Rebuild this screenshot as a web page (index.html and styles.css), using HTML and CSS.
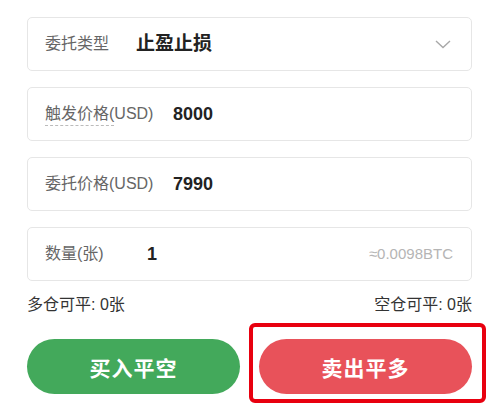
FILE: index.html
```html
<!DOCTYPE html>
<html>
<head>
<meta charset="utf-8">
<link rel="stylesheet" href="styles.css">
</head>
<body>
<div class="form">
  <div class="field">
    <span class="label">委托类型</span>
    <span class="value type">止盈止损</span>
    <svg class="chevron" width="16" height="9" viewBox="0 0 16 9"><path d="M1 1 L8 7.5 L15 1" fill="none" stroke="#a8a8a8" stroke-width="1.4"/></svg>
  </div>
  <div class="field">
    <span class="label dashed">触发价格(USD)</span>
    <span class="value">8000</span>
  </div>
  <div class="field">
    <span class="label">委托价格(USD)</span>
    <span class="value">7990</span>
  </div>
  <div class="field">
    <span class="label qty">数量(张)</span>
    <span class="value">1</span>
    <span class="hint">≈0.0098BTC</span>
  </div>
  <div class="avail">
    <span>多仓可平: 0张</span>
    <span>空仓可平: 0张</span>
  </div>
  <div class="actions">
    <button class="btn buy">买入平空</button>
    <div class="highlight"><button class="btn sell">卖出平多</button></div>
  </div>
</div>
</body>
</html>
```

FILE: styles.css
```css
* { box-sizing: border-box; }
html, body { height: 410px; overflow: hidden; }
body {
  margin: 0;
  background: #fff;
  font-family: "Liberation Sans", Arial, "Noto Sans CJK SC", sans-serif;
}
.form {
  width: 500px;
  padding: 17px 28px 0 27px;
  display: flex;
  flex-direction: column;
  gap: 16px;
}
.field {
  height: 54px;
  border: 1px solid #e6e6e6;
  border-radius: 5px;
  display: flex;
  align-items: center;
  padding: 0 18px 0 17px;
  line-height: 20px;
}
.label {
  font-size: 16px;
  color: #666;
  width: 128px;
  flex-shrink: 0;
}
.field:first-child .label { width: 91px; }
.label.qty { width: 102px; }
.label.dashed {
  position: relative;
}
.label.dashed::after {
  content: "";
  position: absolute;
  left: 0;
  top: 21px;
  width: 69px;
  border-bottom: 1px dashed #bbb;
}
.value {
  font-size: 18px;
  font-weight: bold;
  color: #222;
}
.value.type { font-size: 19px; }
.chevron { margin-left: auto; margin-right: 2px; }
.hint {
  margin-left: auto;
  font-size: 15px;
  color: #b5b5b5;
}
.avail {
  display: flex;
  justify-content: space-between;
  font-size: 16px;
  line-height: 20px;
  color: #333;
  margin-top: -2px;
}
.actions {
  display: flex;
  justify-content: space-between;
  align-items: flex-start;
  margin-top: 8px;
}
.btn {
  display: block;
  width: 213px;
  height: 55px;
  border: none;
  border-radius: 28px;
  color: #fff;
  font-size: 21px;
  line-height: 24px;
  font-weight: bold;
  font-family: "Noto Sans CJK SC", sans-serif;
  letter-spacing: 1px;
  padding: 0;
}
.buy { background: #43a95b; }
.sell { background: #e8525a; }
.highlight {
  position: relative;
  display: flex;
}
.highlight::before {
  content: "";
  position: absolute;
  left: -10px;
  right: -14px;
  top: -16px;
  bottom: -9px;
  border: 4px solid #e8000f;
  border-radius: 6px;
  pointer-events: none;
}
```
